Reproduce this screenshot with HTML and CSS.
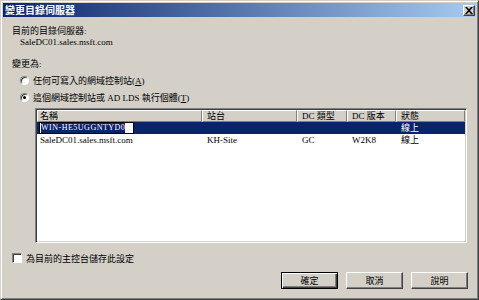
FILE: index.html
```html
<!DOCTYPE html>
<html lang="zh-Hant">
<head>
<meta charset="utf-8">
<title>變更目錄伺服器</title>
<link rel="stylesheet" href="styles.css">
</head>
<body>
<div class="window">
  <div class="titlebar">
    <span class="title">變更目錄伺服器</span>
    <span class="close"><svg width="8" height="7" viewBox="0 0 8 7"><path d="M0 0h2l2 2.2L6 0h2L5 3.5 8 7H6L4 4.8 2 7H0l3-3.5z" fill="#000"/></svg></span>
  </div>
  <div class="content">
    <div class="line label-top">目前的目錄伺服器:</div>
    <div class="line server">SaleDC01.sales.msft.com</div>
    <div class="line label-change">變更為:</div>
    <div class="radio-row first"><span class="radio"></span><span>任何可寫入的網域控制站(<u>A</u>)</span></div>
    <div class="radio-row"><span class="radio checked"></span><span>這個網域控制站或 AD LDS 執行個體(<u>T</u>)</span></div>
    <div class="list">
      <div class="lv-row lv-head">
        <div class="hcell first-col">名稱</div>
        <div class="hcell">站台</div>
        <div class="hcell">DC 類型</div>
        <div class="hcell">DC 版本</div>
        <div class="hcell">狀態</div>
      </div>
      <div class="lv-row selected">
        <div class="cell first-col"><span class="edit"><span class="sel-text">WIN-HE5UGGNTYD0</span></span></div>
        <div class="cell"></div>
        <div class="cell"></div>
        <div class="cell"></div>
        <div class="cell">線上</div>
      </div>
      <div class="lv-row">
        <div class="cell first-col">SaleDC01.sales.msft.com</div>
        <div class="cell">KH-Site</div>
        <div class="cell">GC</div>
        <div class="cell">W2K8</div>
        <div class="cell">線上</div>
      </div>
    </div>
    <div class="check-row"><span class="checkbox"></span><span>為目前的主控台儲存此設定</span></div>
    <div class="buttons">
      <button class="btn default">確定</button>
      <button class="btn">取消</button>
      <button class="btn">說明</button>
    </div>
  </div>
</div>
</body>
</html>
```
FILE: styles.css
```css
* { box-sizing: border-box; }
html, body { margin: 0; padding: 0; background: #d4d0c8; }
body {
  font-family: "Liberation Serif", "Noto Sans CJK TC", serif;
  font-size: 9px;
  color: #000;
}
.window {
  width: 479px;
  height: 300px;
  background: #d4d0c8;
  border: 1px solid;
  border-color: #d4d0c8 #404040 #404040 #d4d0c8;
  box-shadow: inset 1px 1px #fff, inset -1px -1px #808080;
  padding: 2px;
  overflow: hidden;
}
.titlebar {
  height: 14px;
  background: linear-gradient(to right, #0a246a, #a6caf0);
  display: flex;
  align-items: center;
  justify-content: space-between;
  padding: 0 1px 0 2px;
}
.title {
  color: #fff;
  font-weight: bold;
  font-size: 10px;
  line-height: 12px;
  font-family: "Noto Sans CJK TC", sans-serif;
}
.close {
  width: 12px;
  height: 11px;
  background: #d4d0c8;
  border: 1px solid;
  border-color: #fff #404040 #404040 #fff;
  box-shadow: inset -1px -1px #808080;
  display: flex;
  align-items: center;
  justify-content: center;
}
.close svg { display: block; }
.content { padding-left: 9px; }
.line { line-height: 11px; height: 11px; white-space: nowrap; }
.label-top { margin-top: 9px; }
.server { padding-left: 8px; }
.label-change { margin-top: 11px; }
.radio-row {
  margin-top: 4px;
  height: 13px;
  display: flex;
  align-items: center;
  padding-left: 8px;
  gap: 4px;
  white-space: nowrap;
}
.radio {
  width: 9px;
  height: 9px;
  border-radius: 50%;
  background: #fff;
  border: 1px solid;
  border-color: #808080 #fff #fff #808080;
  box-shadow: inset 1px 1px #404040;
  display: flex;
  align-items: center;
  justify-content: center;
  flex: none;
}
.radio.checked::after {
  content: "";
  width: 3px;
  height: 3px;
  border-radius: 50%;
  background: #000;
}
.list {
  margin-top: 4px;
  margin-left: 23px;
  width: 432px;
  height: 135px;
  background: #fff;
  border: 1px solid;
  border-color: #808080 #fff #fff #808080;
  box-shadow: inset 1px 1px #404040, inset -1px -1px #d4d0c8;
  padding: 1px;
}
.lv-row {
  display: grid;
  grid-template-columns: 165px 95px 50px 49px 69px;
  height: 12px;
  line-height: 12px;
  white-space: nowrap;
}
.lv-head { height: 12px; }
.hcell {
  background: #d4d0c8;
  border: 1px solid;
  border-color: #fff #808080 #808080 #fff;
  padding-left: 4px;
  line-height: 10px;
  overflow: hidden;
}
.hcell.first-col { padding-left: 2px; }
.cell { padding-left: 5px; overflow: hidden; }
.cell.first-col { padding-left: 3px; }
.selected { background: #0a246a; color: #fff; }
.selected .cell.first-col { padding-left: 2px; display: flex; align-items: center; }
.edit {
  display: flex;
  align-items: center;
  width: 95px;
  height: 12px;
  background: #fff;
  border: 1px solid #000;
  padding-left: 1px;
  overflow: hidden;
}
.sel-text {
  background: #0a246a;
  color: #fff;
  font-size: 8px;
  letter-spacing: 0.5px;
  line-height: 10px;
  height: 10px;
}
.check-row {
  margin-top: 9px;
  height: 12px;
  display: flex;
  align-items: center;
  gap: 4px;
  white-space: nowrap;
}
.checkbox {
  width: 10px;
  height: 10px;
  background: #fff;
  border: 1px solid;
  border-color: #808080 #fff #fff #808080;
  box-shadow: inset 1px 1px #404040;
  flex: none;
}
.buttons {
  margin-top: 8px;
  display: flex;
  justify-content: flex-end;
  gap: 8px;
  padding-right: 8px;
}
.btn {
  width: 57px;
  height: 17px;
  margin: 0;
  padding: 0;
  font-family: "Liberation Serif", "Noto Sans CJK TC", serif;
  font-size: 9px;
  color: #000;
  background: #d4d0c8;
  border: 1px solid;
  border-color: #fff #404040 #404040 #fff;
  box-shadow: inset -1px -1px #808080;
}
.btn.default {
  border: 1px solid #000;
  box-shadow: inset 1px 1px #fff, inset -1px -1px #404040, inset -2px -2px #808080;
}
```
